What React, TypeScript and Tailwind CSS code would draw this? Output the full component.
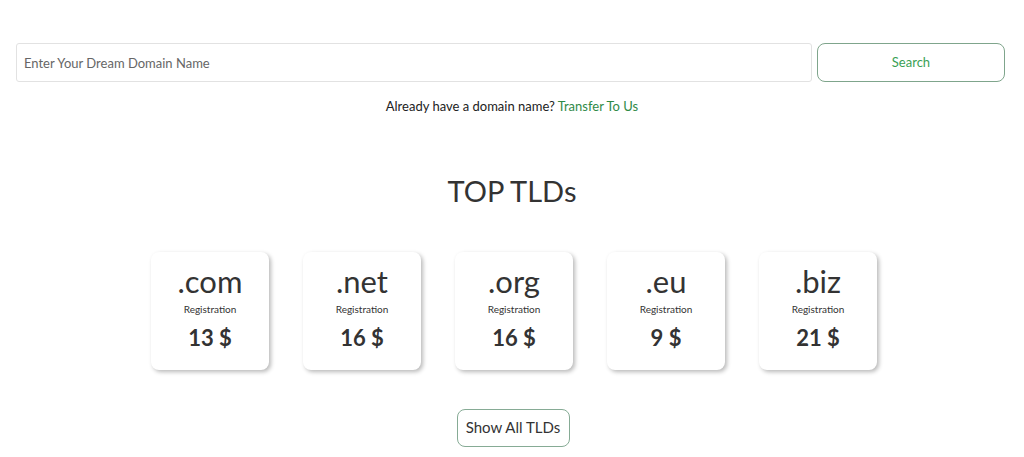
import React from "react";

const tlds = [
  { ext: ".com", price: 13 },
  { ext: ".net", price: 16 },
  { ext: ".org", price: 16 },
  { ext: ".eu", price: 9 },
  { ext: ".biz", price: 21 },
];

export default function App() {
  return (
    <div className="min-h-[457px] bg-white text-[#222] font-['Lato','Open_Sans',sans-serif]">
      <div className="flex gap-[5px] pl-4 pr-[19px] pt-[43px]">
        <input
          placeholder="Enter Your Dream Domain Name"
          className="h-[39px] flex-1 rounded-[3px] border border-[#e2e2e2] px-[7px] text-[13px] text-[#444] placeholder:text-[#666] outline-none"
        />
        <button className="h-[39px] w-[188px] rounded-[8px] border border-[#7fa58c] text-[13px] text-[#3a9f55]">
          Search
        </button>
      </div>

      <p className="mt-[15px] text-center text-[13px] text-[#222]">
        Already have a domain name? <a className="text-[#2f8a47]">Transfer To Us</a>
      </p>

      <h2 className="mt-[54px] text-center text-[29px] leading-[40px] text-[#333]">TOP TLDs</h2>

      <div className="mt-[41px] flex justify-center gap-[34px] pl-[4px]">
        {tlds.map((t) => (
          <div
            key={t.ext}
            className="flex h-[118px] w-[118px] flex-col items-center rounded-[8px] bg-white pt-[9px] shadow-[2px_2px_4px_rgba(0,0,0,0.28)]"
          >
            <div className="text-[31px] leading-[40px] text-[#333]">{t.ext}</div>
            <div className="mt-[1px] text-[10px] leading-[14px] text-[#333]">Registration</div>
            <div className="mt-[9px] text-[22px] font-bold leading-[26px] text-[#333]">{t.price} $</div>
          </div>
        ))}
      </div>

      <div className="mt-[39px] flex justify-center pl-[2px]">
        <button className="h-[38px] w-[113px] rounded-[8px] border border-[#86ab95] text-[15px] text-[#333]">
          Show All TLDs
        </button>
      </div>
    </div>
  );
}
